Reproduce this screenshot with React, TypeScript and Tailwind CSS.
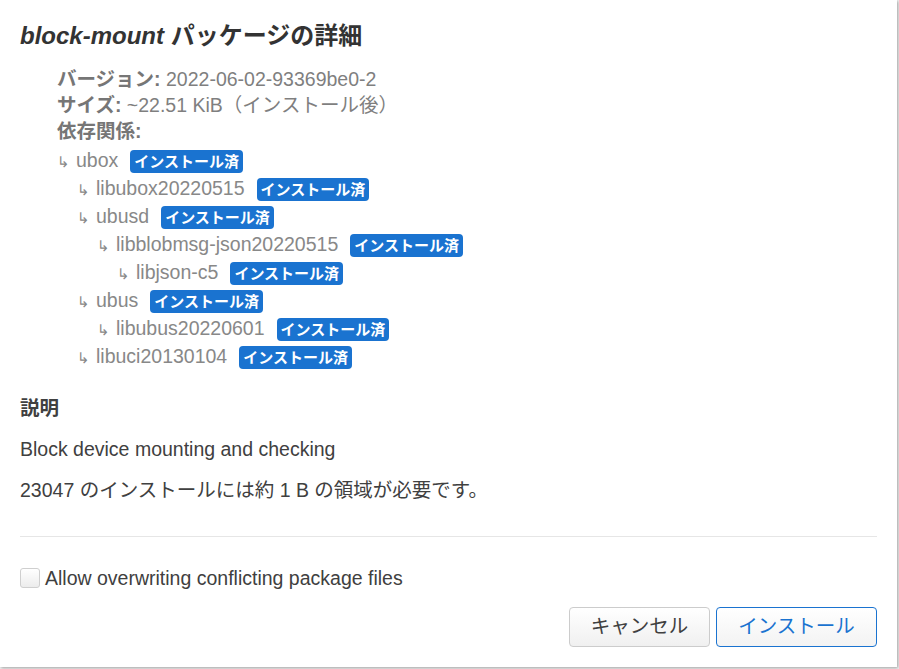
const font = { fontFamily: '"Liberation Sans", "Noto Sans CJK JP", sans-serif' };

type Dep = { name: string; level: 1 | 2 | 3 | 4 };

const deps: Dep[] = [
  { name: 'ubox', level: 1 },
  { name: 'libubox20220515', level: 2 },
  { name: 'ubusd', level: 2 },
  { name: 'libblobmsg-json20220515', level: 3 },
  { name: 'libjson-c5', level: 4 },
  { name: 'ubus', level: 2 },
  { name: 'libubus20220601', level: 3 },
  { name: 'libuci20130104', level: 2 },
];

// offsets from the panel's content edge (x=20)
const indent: Record<number, string> = {
  1: 'pl-[37px]',
  2: 'pl-[57px]',
  3: 'pl-[77px]',
  4: 'pl-[97px]',
};

const Badge = () => (
  <span className="ml-[12px] inline-flex h-[23px] items-center rounded-[4px] bg-[#1a73d0] px-[4px] text-[15px] font-bold leading-none text-white">
    インストール済
  </span>
);

export default function App() {
  return (
    <div className="h-[669px] w-[899px] overflow-hidden bg-[#f2f2f2]" style={font}>
      <div className="flex h-[667px] w-[897px] flex-col bg-white px-[20px] pt-[21px] shadow-[1px_1px_3px_rgba(0,0,0,0.35)]">
        <h4 className="text-[24px] font-bold leading-[30px] text-[#333]">
          <em>block-mount</em> パッケージの詳細
        </h4>

        <div className="mt-[15px] pl-[37px] text-[19.5px] leading-[26px] text-[#7f7f7f]">
          <div>
            <span className="font-bold text-[#767676]">バージョン:</span> 2022-06-02-93369be0-2
          </div>
          <div>
            <span className="font-bold text-[#767676]">サイズ:</span> ~22.51 KiB（インストール後）
          </div>
          <div className="font-bold text-[#767676]">依存関係:</div>
        </div>

        <ul className="mt-[3px] text-[19.5px] text-[#888]">
          {deps.map((d, i) => (
            <li key={i} className={`flex h-[28px] items-center ${indent[d.level]}`}>
              <span
                className="w-[19px] pt-[2px] text-[15px] text-[#888]"
                style={{ fontFamily: '"DejaVu Sans", sans-serif' }}
              >
                ↳
              </span>
              <span>{d.name}</span>
              <Badge />
            </li>
          ))}
        </ul>

        <h5 className="mt-[24px] text-[19.5px] font-bold leading-[26px] text-[#404040]">説明</h5>
        <p className="mt-[15px] text-[19.5px] leading-[26px] text-[#404040]">Block device mounting and checking</p>
        <p className="mt-[15px] text-[19.5px] leading-[26px] text-[#404040]">
          23047 のインストールには約 1 B の領域が必要です。
        </p>

        <hr className="mt-[33px] border-t border-[#e6e6e6]" />

        <label className="mt-[28px] flex items-center text-[19.5px] leading-[26px] text-[#404040]">
          <span className="mr-[5px] h-[20px] w-[20px] rounded-[3px] border border-[#cfcfcf] bg-gradient-to-b from-white to-[#ececec]" />
          Allow overwriting conflicting package files
        </label>

        <div className="mt-[16px] flex justify-end gap-[6px]">
          <button className="h-[40px] w-[141px] rounded-[4px] border border-[#cccccc] bg-gradient-to-b from-white to-[#f0f0f0] text-[19.5px] text-[#404040]">
            キャンセル
          </button>
          <button className="h-[40px] w-[161px] rounded-[4px] border border-[#1a73d0] bg-gradient-to-b from-white to-[#f3f3f3] text-[19.5px] text-[#1a73d0]">
            インストール
          </button>
        </div>
      </div>
    </div>
  );
}
